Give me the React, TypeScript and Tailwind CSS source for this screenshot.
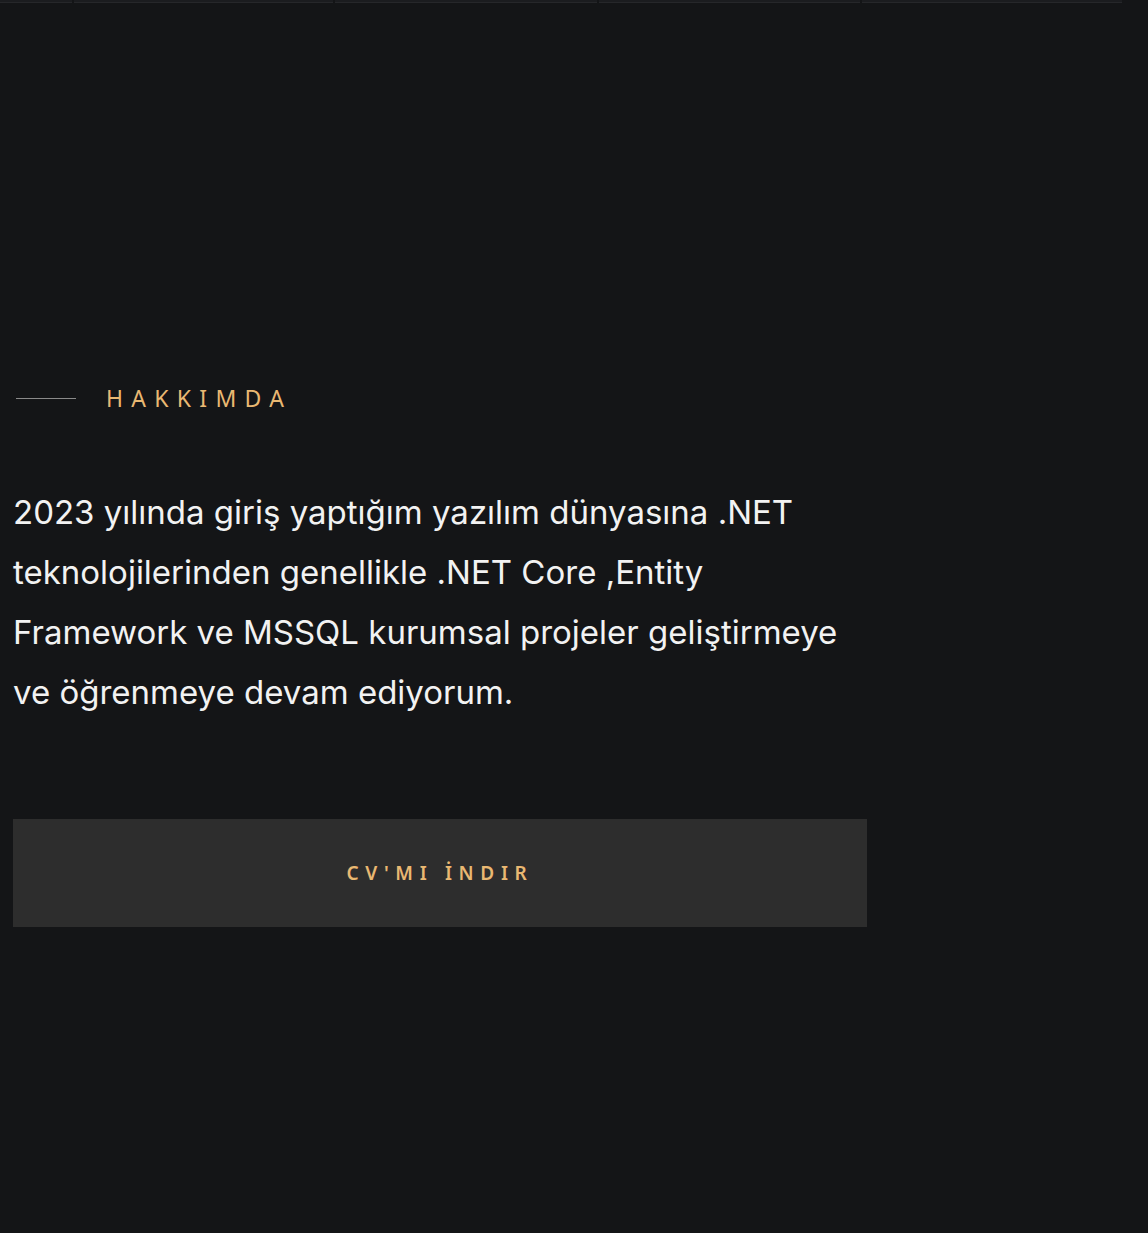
export default function App() {
  const cards = ['w-[72px]', 'w-[259px]', 'w-[262px]', 'w-[261px]', 'w-[260px]'];

  return (
    <div className="min-h-[1233px] bg-[#141517] text-white" style={{ fontFamily: '"Noto Sans", Inter, sans-serif' }}>
      {/* cut-off cards from previous section */}
      <div className="flex gap-[2px]">
        {cards.map((w, i) => (
          <div key={i} className={`${w} h-[3px] bg-[#1b1c1f] border-b border-[#26272a]`} />
        ))}
      </div>

      <section className="px-[13px] pt-[380px]">
        <div className="flex items-center gap-[30px] pl-[3px]">
          <span className="block w-[60px] h-px bg-[#8a8a8a]" />
          <h2 className="text-[23px] leading-[30px] tracking-[0.36em] text-[#e9b872]">HAKKIMDA</h2>
        </div>

        <p
          className="mt-[69px] w-[860px] text-[33px] leading-[60px] text-[#f2f2f2]"
          style={{ fontFamily: 'Inter, "Noto Sans", sans-serif' }}
        >
          2023 yılında giriş yaptığım yazılım dünyasına .NET
          <br />
          teknolojilerinden genellikle .NET Core ,Entity
          <br />
          Framework ve MSSQL kurumsal projeler geliştirmeye
          <br />
          ve öğrenmeye devam ediyorum.
        </p>

        <button className="mt-[97px] flex h-[108px] w-[854px] items-center justify-center bg-[#2d2d2d] text-[19px] font-semibold tracking-[0.35em] text-[#e9b872]">
          CV'MI İNDIR
        </button>
      </section>
    </div>
  );
}
